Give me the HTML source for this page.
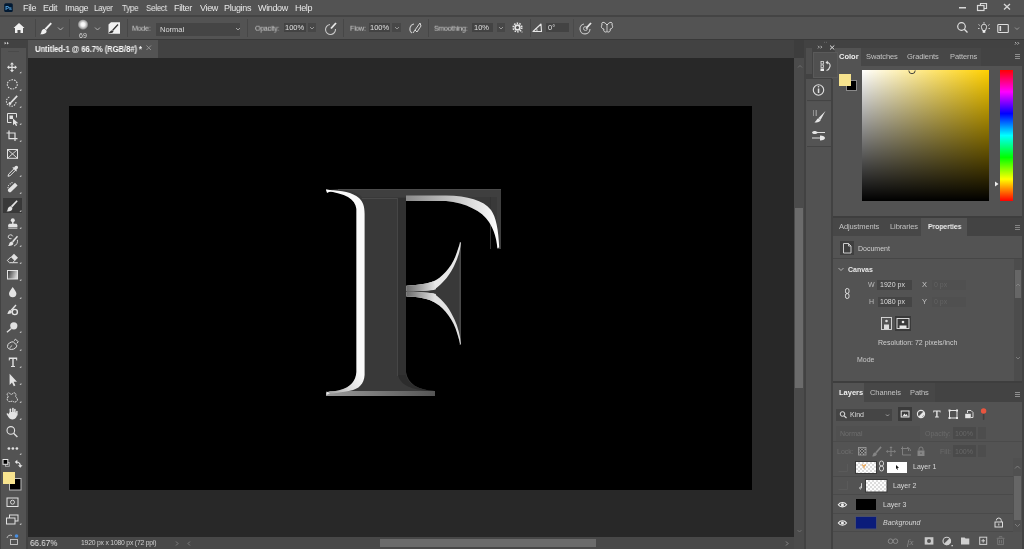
<!DOCTYPE html>
<html><head><meta charset="utf-8">
<style>
*{margin:0;padding:0;box-sizing:border-box}
html,body{width:1024px;height:549px;overflow:hidden;background:#3d3d3d;font-family:"Liberation Sans",sans-serif;color:#d6d6d6}
.a{position:absolute}
.t{position:absolute;white-space:nowrap;line-height:1;will-change:transform}
.menu{font-size:9px;color:#e8e8e8;top:3.6px;letter-spacing:-0.35px}
.lbl{font-size:7.5px;color:#cfcfcf;letter-spacing:-0.2px;transform:translateY(.7px) scaleX(.93);transform-origin:0 0}
.ptab{font-size:7.5px;color:#c2c2c2;letter-spacing:-0.1px}
svg{position:absolute;left:0;top:0;will-change:transform}
</style></head>
<body>
<!-- ===== base panels ===== -->
<div class="a" style="left:0;top:0;width:1024px;height:16px;background:#535353"></div>
<div class="a" style="left:0;top:15px;width:1024px;height:1.5px;background:#444444"></div>
<div class="a" style="left:0;top:17px;width:1024px;height:22px;background:#535353"></div>
<div class="a" style="left:0;top:39px;width:1024px;height:1px;background:#393939"></div>
<!-- doc tab strip -->
<div class="a" style="left:28px;top:40px;width:766px;height:18px;background:#424242"></div>
<div class="a" style="left:28px;top:40px;width:130px;height:18px;background:#535353"></div>
<div class="t" style="left:35px;top:44.7px;font-size:8.3px;font-weight:bold;color:#f4f4f4;letter-spacing:-0.1px;transform:scaleX(.93);transform-origin:0 0">Untitled-1 @ 66.7% (RGB/8#) *</div>
<div class="a" style="left:28px;top:58px;width:766px;height:479px;background:#282828"></div>
<div class="a" style="left:69px;top:106px;width:683px;height:384px;background:#000"></div>
<!-- status bar -->
<div class="a" style="left:28px;top:537px;width:766px;height:12px;background:#484848"></div>
<div class="t" style="left:29.8px;top:538.6px;font-size:9px;color:#e2e2e2;transform:scaleX(.9);transform-origin:0 0">66.67%</div>
<div class="t" style="left:80.5px;top:539.8px;font-size:6.8px;color:#cfcfcf;letter-spacing:-0.2px">1920 px x 1080 px (72 ppi)</div>
<div class="a" style="left:380px;top:539px;width:216px;height:8px;background:#6b6b6b"></div>
<!-- toolbar -->
<div class="a" style="left:0;top:40px;width:28px;height:509px;background:#424242"></div>
<div class="a" style="left:1px;top:48px;width:25px;height:501px;background:#535353"></div>
<div class="a" style="left:8px;top:51px;width:11px;height:1px;background:#4a4a4a"></div>
<div class="a" style="left:3px;top:198px;width:19px;height:15px;background:#393939"></div>
<!-- vertical scrollbar -->
<div class="a" style="left:794px;top:58px;width:10px;height:491px;background:#4b4b4b"></div>
<div class="a" style="left:794.5px;top:208px;width:8.5px;height:180px;background:#6b6b6b"></div>

<!-- icon column -->
<div class="a" style="left:804px;top:40px;width:220px;height:509px;background:#424242"></div>
<div class="a" style="left:806px;top:79px;width:26px;height:470px;background:#525252"></div>
<div class="a" style="left:806px;top:48px;width:6px;height:26px;background:#4e4e4e"></div>
<div class="a" style="left:807px;top:80px;width:25px;height:21px;background:#525252;border-bottom:1px solid #444"></div>
<div class="a" style="left:807px;top:102px;width:25px;height:45px;background:#545454;border-bottom:1px solid #444"></div>
<!-- right panel column -->
<div class="a" style="left:832px;top:48px;width:190px;height:501px;background:#535353"></div>

<!-- Color panel -->
<div class="a" style="left:832px;top:48px;width:190px;height:18px;background:#434343"></div>
<div class="a" style="left:861px;top:48px;width:120px;height:18px;background:#474747"></div>
<div class="a" style="left:835px;top:48px;width:26px;height:18px;background:#535353"></div>
<div class="t" style="left:839px;top:52.6px;font-size:7.5px;font-weight:bold;color:#f0f0f0">Color</div>
<div class="t ptab" style="left:866px;top:52.6px">Swatches</div>
<div class="t ptab" style="left:907px;top:52.6px">Gradients</div>
<div class="t ptab" style="left:950px;top:52.6px">Patterns</div>
<div class="a" style="left:839px;top:74px;width:12px;height:12px;background:#f6e38e;border:1px solid #6a6a6a"></div>
<div class="a" style="left:846px;top:80px;width:11px;height:11px;background:#000;border:1px solid #8a8a8a"></div>
<div class="a" style="left:839px;top:74px;width:12px;height:12px;background:#f6e38e"></div>
<div class="a" style="left:862px;top:70px;width:127px;height:131px;background:linear-gradient(to bottom,rgba(0,0,0,0),#000),linear-gradient(to right,#fff,#ffd000)"></div>
<div class="a" style="left:1000px;top:70px;width:13px;height:131px;background:linear-gradient(to bottom,#ff0000 0%,#ff00ff 16.7%,#0000ff 33.3%,#00ffff 50%,#00ff00 66.7%,#ffff00 83.3%,#ff0000 100%)"></div>
<div class="a" style="left:832px;top:216px;width:190px;height:2px;background:#3e3e3e"></div>

<div class="a" style="left:813px;top:52px;width:25px;height:26px;background:#505050;border:1px solid #5a5a5a"></div>
<!-- Properties panel -->
<div class="a" style="left:832px;top:218px;width:190px;height:18px;background:#434343"></div>
<div class="a" style="left:832px;top:218px;width:89px;height:18px;background:#474747"></div>
<div class="a" style="left:921px;top:218px;width:46px;height:18px;background:#535353"></div>
<div class="t ptab" style="left:839px;top:222.6px">Adjustments</div>
<div class="t ptab" style="left:890px;top:222.6px">Libraries</div>
<div class="t" style="left:928px;top:222.6px;font-size:7.5px;font-weight:bold;color:#f0f0f0;transform:scaleX(.9);transform-origin:0 0">Properties</div>
<div class="a" style="left:840px;top:241px;width:14px;height:14px;background:#3f3f3f"></div>
<div class="t" style="left:858px;top:245px;font-size:7px;color:#d0d0d0">Document</div>
<div class="a" style="left:832px;top:258px;width:190px;height:1px;background:#464646"></div>
<div class="t" style="left:848px;top:266px;font-size:7px;font-weight:bold;color:#e8e8e8">Canvas</div>
<div class="t" style="left:868px;top:281px;font-size:7px;color:#bcbcbc">W</div>
<div class="a" style="left:877px;top:280px;width:35px;height:10px;background:#454545"></div>
<div class="t" style="left:880px;top:281px;font-size:7px;color:#dedede">1920 px</div>
<div class="t" style="left:922px;top:281px;font-size:7.5px;color:#c4c4c4">X</div>
<div class="a" style="left:932px;top:280px;width:34px;height:10px;background:#505050"></div>
<div class="t" style="left:934px;top:281px;font-size:7px;color:#636363">0 px</div>
<div class="t" style="left:869px;top:298px;font-size:7px;color:#bcbcbc">H</div>
<div class="a" style="left:878px;top:297px;width:34px;height:10px;background:#454545"></div>
<div class="t" style="left:880px;top:298px;font-size:7px;color:#dedede">1080 px</div>
<div class="t" style="left:922px;top:298px;font-size:7.5px;color:#c4c4c4">Y</div>
<div class="a" style="left:932px;top:297px;width:34px;height:10px;background:#505050"></div>
<div class="t" style="left:934px;top:298px;font-size:7px;color:#636363">0 px</div>
<div class="a" style="left:895px;top:316px;width:16px;height:15px;background:#3a3a3a"></div>
<div class="t" style="left:878px;top:339px;font-size:7px;color:#cfcfcf">Resolution: 72 pixels/inch</div>
<div class="t" style="left:857px;top:356px;font-size:7px;color:#c8c8c8">Mode</div>
<div class="a" style="left:1014px;top:259px;width:8px;height:122px;background:#4c4c4c"></div>
<div class="a" style="left:1015px;top:270px;width:6px;height:28px;background:#666"></div>
<div class="a" style="left:832px;top:381px;width:190px;height:2px;background:#3e3e3e"></div>

<!-- Layers panel -->
<div class="a" style="left:832px;top:383px;width:190px;height:19px;background:#434343"></div>
<div class="a" style="left:864px;top:383px;width:71px;height:19px;background:#474747"></div>
<div class="a" style="left:832px;top:383px;width:32px;height:19px;background:#535353"></div>
<div class="t" style="left:839px;top:388.6px;font-size:7.5px;font-weight:bold;color:#f0f0f0">Layers</div>
<div class="t ptab" style="left:870px;top:388.6px">Channels</div>
<div class="t ptab" style="left:910px;top:388.6px">Paths</div>
<div class="a" style="left:836px;top:409px;width:56px;height:12px;background:#454545"></div>
<div class="t" style="left:850px;top:411px;font-size:7px;color:#dcdcdc">Kind</div>
<div class="a" style="left:898px;top:407px;width:14px;height:14px;background:#3a3a3a"></div>
<div class="a" style="left:836px;top:426px;width:84px;height:16px;background:#505050"></div>
<div class="t" style="left:840px;top:430px;font-size:7px;color:#6e6e6e">Normal</div>
<div class="t" style="left:925px;top:430px;font-size:7px;color:#6a6a6a">Opacity:</div>
<div class="a" style="left:953px;top:427px;width:23px;height:12px;background:#4a4a4a"></div>
<div class="t" style="left:955px;top:430px;font-size:7px;color:#676767">100%</div>
<div class="a" style="left:978px;top:427px;width:8px;height:12px;background:#4d4d4d"></div>
<div class="a" style="left:832px;top:441px;width:190px;height:1px;background:#4b4b4b"></div>
<div class="t" style="left:837px;top:448px;font-size:7px;color:#6e6e6e">Lock:</div>
<div class="t" style="left:940px;top:448px;font-size:7px;color:#6a6a6a">Fill:</div>
<div class="a" style="left:953px;top:445px;width:23px;height:12px;background:#4a4a4a"></div>
<div class="t" style="left:955px;top:448px;font-size:7px;color:#676767">100%</div>
<div class="a" style="left:978px;top:445px;width:8px;height:12px;background:#4d4d4d"></div>
<!-- layer rows -->
<div class="a" style="left:832px;top:458px;width:181px;height:74px;background:#535353"></div>
<div class="a" style="left:832px;top:476px;width:181px;height:1px;background:#4a4a4a"></div>
<div class="a" style="left:832px;top:494px;width:181px;height:1px;background:#4a4a4a"></div>
<div class="a" style="left:832px;top:513px;width:181px;height:1px;background:#4a4a4a"></div>
<div class="a" style="left:832px;top:531px;width:181px;height:1px;background:#4a4a4a"></div>
<div class="a" style="left:856px;top:462px;width:20px;height:11px;background:#f2f2f2"></div>
<div class="a" style="left:887px;top:462px;width:20px;height:11px;background:#fff"></div>
<div class="t" style="left:913px;top:463px;font-size:7px;color:#d8d8d8">Layer 1</div>
<div class="a" style="left:866px;top:480px;width:21px;height:12px;background:#f2f2f2"></div>
<div class="t" style="left:893px;top:482px;font-size:7px;color:#d8d8d8">Layer 2</div>
<div class="a" style="left:856px;top:499px;width:20px;height:11px;background:#000"></div>
<div class="t" style="left:883px;top:501px;font-size:7px;color:#d8d8d8">Layer 3</div>
<div class="t" style="left:883px;top:519px;font-size:7px;font-style:italic;color:#d8d8d8">Background</div>
<div class="a" style="left:1013px;top:458px;width:9px;height:74px;background:#505050"></div>
<div class="a" style="left:1014px;top:476px;width:7px;height:44px;background:#666"></div>

<div class="a" style="left:831px;top:79px;width:2px;height:470px;background:#424242"></div>
<!-- ===== options bar text ===== -->
<div class="t" style="left:78.8px;top:31.6px;font-size:7px;color:#dadada">69</div>
<div class="t lbl" style="left:132px;top:24px">Mode:</div>
<div class="a" style="left:156px;top:23px;width:84px;height:13px;background:#454545"></div>
<div class="t" style="left:160px;top:26px;font-size:7.5px;color:#dcdcdc">Normal</div>
<div class="t lbl" style="left:255px;top:24px">Opacity:</div>
<div class="a" style="left:284px;top:23px;width:22px;height:9px;background:#434343"></div>
<div class="t" style="left:285px;top:24px;font-size:7.5px;color:#e0e0e0">100%</div>
<div class="a" style="left:308px;top:23px;width:8px;height:9px;background:#474747"></div>
<div class="t lbl" style="left:350px;top:24px">Flow:</div>
<div class="a" style="left:369px;top:23px;width:21px;height:9px;background:#434343"></div>
<div class="t" style="left:370px;top:24px;font-size:7.5px;color:#e0e0e0">100%</div>
<div class="a" style="left:392px;top:23px;width:9px;height:9px;background:#474747"></div>
<div class="t lbl" style="left:434px;top:24px">Smoothing:</div>
<div class="a" style="left:472px;top:23px;width:21px;height:9px;background:#434343"></div>
<div class="t" style="left:474px;top:24px;font-size:7.5px;color:#e0e0e0">10%</div>
<div class="a" style="left:497px;top:23px;width:8px;height:9px;background:#474747"></div>
<div class="a" style="left:546px;top:23px;width:23px;height:9px;background:#434343"></div>
<div class="t" style="left:548px;top:24px;font-size:7.5px;color:#e0e0e0">0°</div>

<!-- menu -->
<div class="t menu" style="left:23px">File</div>
<div class="t menu" style="left:43px">Edit</div>
<div class="t menu" style="left:64.5px">Image</div>
<div class="t menu" style="left:94.4px;transform:scaleX(.9);transform-origin:0 0">Layer</div>
<div class="t menu" style="left:121.5px;transform:scaleX(.9);transform-origin:0 0">Type</div>
<div class="t menu" style="left:146px;transform:scaleX(.9);transform-origin:0 0">Select</div>
<div class="t menu" style="left:174px">Filter</div>
<div class="t menu" style="left:200px">View</div>
<div class="t menu" style="left:224px">Plugins</div>
<div class="t menu" style="left:258px">Window</div>
<div class="t menu" style="left:295px">Help</div>

<!-- ===== SVG overlay: icons + letter ===== -->
<svg width="1024" height="549" viewBox="0 0 1024 549">
<defs>
<linearGradient id="bev" x1="0" y1="0" x2="1" y2="0"><stop offset="0" stop-color="#cfcfcf"/><stop offset="1" stop-color="#ffffff"/></linearGradient>
<radialGradient id="tip" cx="0.5" cy="0.45" r="0.5"><stop offset="0" stop-color="#fff"/><stop offset="0.35" stop-color="#f2f2f2"/><stop offset="0.75" stop-color="#a8a8a8"/><stop offset="1" stop-color="#535353"/></radialGradient>
</defs>
<!-- Ps logo -->
<rect x="4.2" y="3.3" width="8.6" height="8.7" rx="1.5" fill="#021a33"/>
<text x="5.3" y="10.2" font-size="5.6" font-weight="bold" fill="#5aaae6" font-family="Liberation Sans" letter-spacing="-0.3">Ps</text>
<!-- window controls -->
<rect x="959" y="7" width="7" height="1.5" fill="#d8d8d8"/>
<rect x="977.5" y="5.5" width="6.5" height="5" fill="none" stroke="#d8d8d8" stroke-width="1.2"/>
<path d="M980.5 5.5V3.5H986.5V8.5H984" fill="none" stroke="#d8d8d8" stroke-width="1.2"/>
<path d="M1004 4L1010 9.5M1010 4L1004 9.5" stroke="#d8d8d8" stroke-width="1.3"/>
<!-- options icons -->
<path d="M13.5 28L19 23L24.5 28H23V33H20.5V30H17.5V33H15V28Z" fill="#f0f0f0"/>
<rect x="35" y="19" width="1" height="18" fill="#474747"/>
<rect x="69" y="19" width="1" height="18" fill="#474747"/>
<rect x="127" y="19" width="1" height="18" fill="#474747"/>
<rect x="247" y="19" width="1" height="18" fill="#474747"/>
<rect x="343" y="19" width="1" height="18" fill="#474747"/>
<rect x="428" y="19" width="1" height="18" fill="#474747"/>
<rect x="530" y="19" width="1" height="18" fill="#474747"/>
<rect x="573" y="19" width="1" height="18" fill="#4a4a4a"/>
<path d="M50.6 22.4L51.9 23.7L46.2 30L44.8 28.6Z" fill="#f0f0f0"/>
<path d="M44.5 28.8C42.3 29.1 41.6 30.8 41.3 32.2C41.1 33.2 40.7 33.8 40 34.2C42.5 34.5 45.3 34 46.2 32.5C46.7 31.7 46.6 30.6 46.2 30.2Z" fill="#f0f0f0"/>
<path d="M58 27.5L60.5 30L63 27.5" fill="none" stroke="#bbb" stroke-width="0.9"/>
<circle cx="83" cy="25" r="5.5" fill="url(#tip)"/>
<path d="M95 27.5L97.5 30L100 27.5" fill="none" stroke="#bbb" stroke-width="0.9"/>
<path d="M108.5 24.5L111 22.3H120V33.7H108.5Z" fill="#f0f0f0"/>
<path d="M118 24.5L112.5 30.5M112 30.8C111 31 110.5 32 110 32.5C111.5 32.5 112.8 31.8 113 31" stroke="#333" stroke-width="1.3" fill="none"/>
<path d="M236 28L238 30L240 28" fill="none" stroke="#bbb" stroke-width="0.8"/>
<path d="M310 27L312 29L314 27" fill="none" stroke="#aaa" stroke-width="0.8"/>
<path d="M395 27L397 29L399 27" fill="none" stroke="#aaa" stroke-width="0.8"/>
<path d="M499 27L501 29L503 27" fill="none" stroke="#aaa" stroke-width="0.8"/>
<!-- airbrush 1 -->
<path d="M330 24.5A5 5 0 1 0 335.5 29" fill="none" stroke="#c8c8c8" stroke-width="1.1"/>
<path d="M336 23L331 28.5" stroke="#e8e8e8" stroke-width="1.8"/>
<!-- pressure icon -->
<path d="M414 24A5 5 0 0 0 412 33" fill="none" stroke="#c8c8c8" stroke-width="1.1"/>
<path d="M420 23L415 30L417 32L421 26Z" fill="none" stroke="#d8d8d8" stroke-width="1"/>
<path d="M415 30L413 33" stroke="#d8d8d8" stroke-width="1"/>
<!-- gear -->
<circle cx="517.5" cy="27.5" r="4.3" fill="none" stroke="#e6e6e6" stroke-width="1.6" stroke-dasharray="1.5 1.2"/>
<circle cx="517.5" cy="27.5" r="2.4" fill="none" stroke="#e6e6e6" stroke-width="1.6"/>
<rect x="521.5" y="31.5" width="1" height="1" fill="#ddd"/>
<!-- angle -->
<path d="M533 31.5H541.5V31.5L541 24Z" fill="none" stroke="#e6e6e6" stroke-width="1.1" stroke-linejoin="round"/><path d="M537 31.5A4 4 0 0 0 536 28" fill="none" stroke="#e6e6e6" stroke-width="0.9"/>
<!-- pressure size -->
<path d="M584 24A5 5 0 1 0 590 29" fill="none" stroke="#c8c8c8" stroke-width="1.1"/>
<path d="M591 23L586 28.5" stroke="#e8e8e8" stroke-width="1.8"/>
<circle cx="585.5" cy="28.5" r="2" fill="none" stroke="#c8c8c8" stroke-width="0.9"/>
<!-- butterfly -->
<path d="M607 25C604 21 601 22 602 25C600.5 27 602 29 604 29C603 31 605 33 607 31.5C609 33 611 31 610 29C612 29 613.5 27 612 25C613 22 610 21 607 25Z" fill="none" stroke="#e0e0e0" stroke-width="1"/>
<path d="M607 25V31" stroke="#e0e0e0" stroke-width="0.8"/>
<!-- right side opts -->
<circle cx="961.5" cy="26.5" r="3.8" fill="none" stroke="#e0e0e0" stroke-width="1.2"/>
<path d="M964.3 29.3L967.5 32.5" stroke="#e0e0e0" stroke-width="1.3"/>
<path d="M981.5 27.5A2.6 2.6 0 1 1 986.5 27.5L985.5 30.5H982.5Z" fill="none" stroke="#e6e6e6" stroke-width="1"/>
<rect x="982.7" y="30.8" width="2.6" height="2" fill="#f0f0f0"/>
<path d="M984 22V23.5M978.5 24.5L979.8 25.5M989.5 24.5L988.2 25.5M978 28.5H979.5M988.5 28.5H990" stroke="#d8d8d8" stroke-width="0.9"/>
<rect x="997.8" y="24.5" width="10.5" height="8" rx="0.8" fill="none" stroke="#dedede" stroke-width="1.1"/>
<rect x="999.5" y="26" width="1.6" height="5" fill="#dedede"/>
<path d="M1015 27.5L1017 29.5L1019 27.5" fill="none" stroke="#aaa" stroke-width="0.8"/>

<!-- doc tab close -->
<path d="M146.5 45.5L151 50M151 45.5L146.5 50" stroke="#9a9a9a" stroke-width="0.9"/>
<!-- toolbar header -->
<path d="M4.6 41.8L6.4 43.2L4.6 44.6Z M7 41.8L8.8 43.2L7 44.6Z" fill="#d0d0d0"/>

<!-- ===== toolbar icons ===== -->
<g fill="#e2e2e2">
 <!-- move: center (12,67.3) -->
 <path d="M11.4 64.2H12.6V66.7H15.1V67.9H12.6V70.4H11.4V67.9H8.9V66.7H11.4Z"/>
 <path d="M12 62.3L14 64.5H10Z M12 72.3L14 70.1H10Z M7 67.3L9.2 65.3V69.3Z M17 67.3L14.8 65.3V69.3Z"/>
 <!-- object select inner -->
 <rect x="9.5" y="115.5" width="3.5" height="3.5"/>
 <path d="M13 118.5V125.3L14.6 123.8L16 126L17.2 125.4L16 123.2H18.3Z"/>
 <!-- eyedropper -->
 <path d="M15 166.3C15.8 165.5 17 165.5 17.6 166.2C18.3 166.9 18.2 168 17.4 168.8L16.2 170L17 170.8L16.2 171.6L12.4 167.8L13.2 167L14 167.8Z"/>
 <!-- healing -->
 <path d="M15 182.8L17.6 185.4L11.2 191.8C10.5 192.5 9.3 192.5 8.6 191.8L8.4 191.6C7.7 190.9 7.7 189.7 8.4 189Z"/>
 <!-- brush tool -->
 <path d="M16.6 200.2L17.7 201.3L12.2 207.4L10.9 206.1Z"/>
 <path d="M10.6 206.3C8.6 206.6 8 208.1 7.7 209.4C7.5 210.3 7.1 210.9 6.4 211.3C8.7 211.6 11.2 211.1 12 209.8C12.5 209 12.4 208 12 207.6Z"/>
 <!-- stamp -->
 <circle cx="12.8" cy="220.3" r="2"/>
 <rect x="12.1" y="221.5" width="1.4" height="2.5"/>
 <path d="M8.2 227V225.3C8.2 224.4 8.9 223.8 9.8 223.8H15.8C16.7 223.8 17.4 224.4 17.4 225.3V227Z"/>
 <rect x="8.2" y="227.6" width="9.2" height="1"/>
 <!-- history brush -->
 <path d="M17 235.8L18 236.8L13.2 242.4L12 241.2Z"/>
 <path d="M11.7 241.4C9.9 241.7 9.4 243 9.1 244.2C8.9 245 8.6 245.5 8 245.9C10 246.2 12.3 245.7 13 244.6C13.4 243.9 13.3 243 13 242.6Z"/>
 <!-- eraser solid part -->
 <path d="M14 253.8L18 257.8L14.8 261L10.8 257Z"/>
 <!-- blur drop -->
 <path d="M12.7 287C14.6 290 16.4 291.8 16.4 293.6A3.7 3.7 0 0 1 9 293.6C9 291.8 10.8 290 12.7 287Z"/>
 <!-- sponge/dodge brush -->
 <path d="M15.5 304.5L16.5 305.5L11.8 310.8L10.7 309.7Z"/>
 <path d="M10.4 309.9C8.8 310.2 8.3 311.3 8 312.3C7.8 313 7.5 313.5 7 313.8C8.8 314.1 10.8 313.7 11.5 312.7C11.9 312.1 11.8 311.3 11.5 310.9Z"/>
 <!-- dodge lollipop -->
 <circle cx="13.8" cy="325.8" r="3.6"/>
 <!-- T -->
 <path d="M8.8 357.5H17.2V360.5H16.4L16 358.9H13.7V365.9H15V367H11V365.9H12.3V358.9H10L9.6 360.5H8.8Z"/>
 <!-- path select arrow -->
 <path d="M9.6 373.8V385L12 382.4L13.8 386.2L15.4 385.4L13.6 381.7H17Z"/>
 <!-- hand -->
 <path d="M8.6 414.5C8.6 412.5 10 412 12.5 412C15.5 412 17 412.5 17 414.5C17 417.5 15.3 419.4 12.6 419.4C10.3 419.4 9.3 418.3 8.4 417L6.8 414.4C6.3 413.6 7.2 412.9 7.9 413.5Z"/>
 <rect x="9.6" y="408.6" width="1.5" height="7" rx="0.75"/>
 <rect x="12.1" y="407.8" width="1.6" height="7" rx="0.8"/>
 <rect x="14.1" y="408.8" width="1.5" height="7" rx="0.75"/>
 <rect x="16.1" y="410.8" width="1.5" height="5" rx="0.75"/>
 <!-- more dots -->
 <circle cx="8.9" cy="448.5" r="1.35"/><circle cx="12.9" cy="448.5" r="1.35"/><circle cx="16.9" cy="448.5" r="1.35"/>
 <!-- sub arrow marks -->
 <g transform="translate(0,0)">
 <path d="M21.3 71.5V73.3H19.5Z M21.3 89V90.8H19.5Z M21.3 106V107.8H19.5Z M21.3 123V124.8H19.5Z M21.3 140V141.8H19.5Z M21.3 175V176.8H19.5Z M21.3 192V193.8H19.5Z M21.3 210V211.8H19.5Z M21.3 227V228.8H19.5Z M21.3 245V246.8H19.5Z M21.3 262V263.8H19.5Z M21.3 279V280.8H19.5Z M21.3 297V298.8H19.5Z M21.3 331V332.8H19.5Z M21.3 349V350.8H19.5Z M21.3 366V367.8H19.5Z M21.3 383V384.8H19.5Z M21.3 401V402.8H19.5Z M21.3 418V419.8H19.5Z M21.3 453V454.8H19.5Z M21.3 523V524.8H19.5Z"/>
 </g>
</g>
<g fill="none" stroke="#e2e2e2" stroke-width="1.05">
 <!-- marquee -->
 <ellipse cx="12.3" cy="84.4" rx="5" ry="4.6" stroke-dasharray="1.6 1.05"/>
 <!-- quick selection -->
 <path d="M16 102A4.8 4.8 0 1 1 9.5 97" stroke-dasharray="1.5 1.1"/>
 <path d="M17.2 95.8L11 102.5" stroke-width="1.7"/>
 <circle cx="10" cy="103.5" r="1.4" fill="#e2e2e2" stroke="none"/>
 <!-- object select frame -->
 <path d="M16.5 117.5V113.5H7.5V122.5H11.5" stroke-width="1"/>
 <!-- crop -->
 <path d="M9 130.5V138.7H17.5M6.5 133H15V141" stroke-width="1.2"/>
 <!-- frame -->
 <rect x="7.5" y="149.5" width="10" height="8.8" stroke-width="1"/>
 <path d="M7.5 149.5L17.5 158.3M17.5 149.5L7.5 158.3" stroke-width="0.9"/>
 <!-- eyedropper body -->
 <path d="M14.3 168.5L8.6 174.2L8 176.3L10.1 175.7L15.8 170" stroke-width="1"/>
 <!-- healing dots -->
 <path d="M8.5 185.5V185.6M10.2 183.8V183.9M12 182.6V182.7M8 187.6V187.7" stroke-width="1.2" stroke-linecap="round"/>
 <!-- history swirl -->
 <path d="M11.5 238.6C9.4 239.2 7.6 237.8 8.4 236C9.2 234.3 12.3 234.3 12.8 236.4" stroke-width="0.9"/>
 <path d="M17.4 239.8A5.2 5.2 0 0 1 14 246" stroke-width="0.9"/>
 <!-- eraser outline -->
 <path d="M10.8 257L7.3 260.5L9.5 262.7H12.6L14.8 260.5" stroke-width="1"/>
 <path d="M12.6 262.7H17.8" stroke-width="1"/>
 <!-- gradient frame -->
 <!-- sponge ring -->
 <circle cx="14.8" cy="312" r="2.6" stroke-width="1.4"/>
 <!-- lollipop handle -->
 <path d="M11.4 328.4L6.9 332.2" stroke-width="1.3"/>
 <!-- pen -->
 <path d="M7.5 346.5C7.5 343.3 10.8 341.7 13.2 341.8L16.8 345.2C16.8 347.5 14.5 349.5 11.4 349.4C9.2 349.3 7.5 348.4 7.5 346.5Z" stroke-width="1"/>
 <path d="M14 340.6L15.6 339.2L18.2 341.8L16.8 343.4" stroke-width="1"/>
 <path d="M9.5 348L12.2 345.4" stroke-width="0.9"/>
 <!-- custom shape -->
 <path d="M8 396.8C6.6 398.8 7 401.3 9.3 401.6C10.8 401.8 12 400.5 13.4 401.6C15.4 403 18.1 401 17.4 398.9C16.8 397.4 15.1 397.4 15.8 395.6C16.6 393.6 14.6 392 12.9 393.4C11.8 394.3 11.2 395.2 9.9 393.5C8.6 391.8 6.4 393.4 7.4 395.2C7.8 395.9 8.4 396.1 8 396.8Z" stroke-width="1" stroke-dasharray="1.3 0.6"/>
 <!-- zoom -->
 <circle cx="10.8" cy="430.4" r="3.8" stroke-width="1.1"/>
 <path d="M13.6 433.2L17.4 437" stroke-width="1.3"/>
 <!-- quick mask -->
 <rect x="7" y="498" width="11" height="8.5" stroke-width="1"/>
 <circle cx="12.5" cy="502.2" r="2" stroke-width="0.9"/>
 <!-- screen mode -->
 <rect x="9.5" y="515" width="8.5" height="6" stroke-width="1"/>
 <rect x="6.5" y="518" width="8.5" height="6" stroke-width="1" fill="#535353"/>
</g>
<!-- gradient tool -->
<defs><linearGradient id="gt" x1="0" y1="0" x2="1" y2="0.3"><stop offset="0" stop-color="#303030"/><stop offset="1" stop-color="#d0d0d0"/></linearGradient></defs>
<rect x="7.5" y="270.5" width="10" height="8.5" fill="url(#gt)" stroke="#e2e2e2" stroke-width="1"/>
<!-- fg/bg small -->
<rect x="5.5" y="462.5" width="3.8" height="3.8" fill="none" stroke="#bbb" stroke-width="0.8"/>
<rect x="3" y="459.5" width="4.8" height="4.8" fill="#000" stroke="#e6e6e6" stroke-width="1"/>
<path d="M16 462C19 462 20.3 463.5 20.3 466" fill="none" stroke="#e6e6e6" stroke-width="1.2"/><path d="M17.3 459.8L14.8 462L17.3 464.2Z M18 465.3L20.3 467.8L22.6 465.3Z" fill="#e6e6e6"/>
<!-- big swatches -->
<rect x="9.5" y="478.5" width="11.5" height="11.5" fill="#000" stroke="#bdbdbd" stroke-width="1"/>
<rect x="3" y="472" width="12" height="12" fill="#f8e48f"/>
<!-- share -->
<path d="M7 538A3.5 3.5 0 0 1 12 535.5" fill="none" stroke="#c8c8c8" stroke-width="0.9"/>
<rect x="10.5" y="539.5" width="7" height="5" fill="none" stroke="#c8c8c8" stroke-width="0.9"/>
<circle cx="16.5" cy="536" r="1.8" fill="#4a90e2"/>

<!-- icon column -->
<path d="M818 45.8L819.3 47.1L818 48.4M820.5 45.8L821.8 47.1L820.5 48.4" fill="none" stroke="#ccc" stroke-width="0.8"/>
<path d="M830 45.5L834.3 49.5M834.3 45.5L830 49.5" stroke="#e0e0e0" stroke-width="1"/>
<path d="M824 42.3H824.8M826 42.3H826.8" stroke="#888" stroke-width="0.7"/>
<path d="M1015 42L1016.3 43.3L1015 44.6M1017.5 42L1018.8 43.3L1017.5 44.6" fill="none" stroke="#ccc" stroke-width="0.8"/>
<path d="M798 67.5L800 65.5L802 67.5" fill="none" stroke="#777" stroke-width="0.8"/>
<path d="M797.5 530L799.5 532L801.5 530" fill="none" stroke="#777" stroke-width="0.8"/>
<!-- history icon -->
<rect x="821" y="61.5" width="2.5" height="2.5" fill="none" stroke="#ddd" stroke-width="0.8"/>
<rect x="821" y="65" width="2.5" height="2.5" fill="none" stroke="#ddd" stroke-width="0.8"/>
<rect x="820.5" y="68.5" width="3.5" height="2.5" fill="#eee"/>
<path d="M826.5 62.5C829.5 62.5 830.5 64.5 830 66.5C829.5 68.5 828 70 826.5 70.5" fill="none" stroke="#e0e0e0" stroke-width="1.1"/><path d="M825.5 62.5L827.8 60.5V64.5Z" fill="#e0e0e0"/>
<!-- info -->
<circle cx="818.5" cy="90" r="5.2" fill="none" stroke="#e0e0e0" stroke-width="1.1"/>
<rect x="817.8" y="88.5" width="1.5" height="4.5" fill="#e0e0e0"/>
<circle cx="818.5" cy="86.7" r="0.8" fill="#e0e0e0"/>
<!-- brushes -->
<path d="M813 111H814M813 113H814M813 115H814M815.5 111H817M815.5 113H817M815.5 115H817" stroke="#ccc" stroke-width="1"/>
<path d="M825.5 111L818.5 118L820.5 120Z" fill="#e6e6e6"/>
<path d="M818.3 118.2C816.5 119 816.3 121 814.5 122.5C817.5 122.5 820 121.8 820.7 120.2Z" fill="#e6e6e6"/>
<path d="M817 132.5H825M812 138H820" stroke="#e0e0e0" stroke-width="1.2"/>
<path d="M812 132.5C813 130.5 816 130.5 818 132.5C816 134.5 813 134.5 812 132.5Z" fill="#e6e6e6"/>
<path d="M820 135.5C823 135.5 825 136.5 825 138C825 139.5 823 140.5 820 140.5Z" fill="#e6e6e6"/>
<path d="M786 541.5L788 543.5L786 545.5" fill="none" stroke="#9a9a9a" stroke-width="0.8"/>
<path d="M176 541.5L178 543.5L176 545.5M190 541.5L188 543.5L190 545.5" fill="none" stroke="#8a8a8a" stroke-width="0.8"/>

<!-- color panel extras -->
<path d="M1015 54.5H1020M1015 56.5H1020M1015 58.5H1020" stroke="#b0b0b0" stroke-width="0.7"/>
<path d="M908.8 70.5A3.2 3.2 0 0 0 915.2 70.5" fill="none" stroke="#333" stroke-width="0.9"/>
<path d="M995 181.5L998.5 184L995 186.5Z" fill="#eee"/>
<path d="M1015 225.5H1020M1015 227.5H1020M1015 229.5H1020" stroke="#a0a0a0" stroke-width="0.7"/>
<!-- props -->
<path d="M843.5 243.5H848.5L851 246V253H843.5Z" fill="none" stroke="#ddd" stroke-width="0.9"/>
<path d="M848.5 243.5V246H851" fill="none" stroke="#ddd" stroke-width="0.8"/>
<path d="M838.5 268L841 270.5L843.5 268" fill="none" stroke="#bbb" stroke-width="0.9"/>
<rect x="845.5" y="288.5" width="3.5" height="5" rx="1.7" fill="none" stroke="#ddd" stroke-width="1"/>
<rect x="845.5" y="293.5" width="3.5" height="5" rx="1.7" fill="none" stroke="#ddd" stroke-width="1"/>
<rect x="881.5" y="317.5" width="10" height="12" fill="none" stroke="#ddd" stroke-width="0.9"/>
<circle cx="886.5" cy="321" r="1.3" fill="#ddd"/>
<path d="M884 329V324.5H889V329Z" fill="#ddd"/>
<rect x="897" y="318.5" width="12" height="10" fill="none" stroke="#e8e8e8" stroke-width="0.9"/>
<circle cx="903" cy="322" r="1.3" fill="#e8e8e8"/>
<path d="M899.5 328V325.5H906.5V328Z" fill="#e8e8e8"/>
<path d="M1016 286L1018 284L1020 286M1016 357L1018 359L1020 357" fill="none" stroke="#888" stroke-width="0.8"/>
<path d="M1015 392.5H1020M1015 394.5H1020M1015 396.5H1020" stroke="#b0b0b0" stroke-width="0.7"/>
<!-- layers kind -->
<circle cx="842.5" cy="414" r="2.3" fill="none" stroke="#e0e0e0" stroke-width="1"/>
<path d="M844.2 415.8L846.5 418" stroke="#e0e0e0" stroke-width="1.1"/>
<path d="M886 414.5L887.5 416L889 414.5" fill="none" stroke="#bbb" stroke-width="0.8"/>
<rect x="901.2" y="411" width="7.8" height="6" fill="none" stroke="#e6e6e6" stroke-width="1"/>
<path d="M902.6 416.2L904.4 413.6L905.6 415L906.6 414L907.8 416.2Z" fill="#e6e6e6"/>
<circle cx="921" cy="414" r="3.6" fill="none" stroke="#e6e6e6" stroke-width="1.1"/>
<path d="M918.5 416.5L923.5 411.5A3.6 3.6 0 0 1 918.5 416.5Z" fill="#e6e6e6"/>
<path d="M933.3 410.5H940.5V412.6H939.9L939.6 411.5H937.6V416.6H938.8V417.6H935V416.6H936.2V411.5H934.2L933.9 412.6H933.3Z" fill="#e6e6e6"/>
<rect x="949.5" y="410.5" width="7.5" height="7.5" fill="none" stroke="#e6e6e6" stroke-width="1"/>
<rect x="948.5" y="409.5" width="2" height="2" fill="#e6e6e6"/><rect x="956" y="409.5" width="2" height="2" fill="#e6e6e6"/><rect x="948.5" y="417" width="2" height="2" fill="#e6e6e6"/><rect x="956" y="417" width="2" height="2" fill="#e6e6e6"/>
<path d="M967.5 413V410.5H971L973 412.5V417.5H971" fill="none" stroke="#e6e6e6" stroke-width="0.9"/>
<rect x="965.2" y="413.8" width="5.6" height="4.4" fill="#e6e6e6"/>
<rect x="982.8" y="413" width="1.6" height="7" rx="0.8" fill="#3f3f3f"/>
<circle cx="983.6" cy="411" r="2.7" fill="#e8553f"/>
<!-- blend chevrons (dim) -->

<!-- lock icons dim -->
<defs><pattern id="chk2" x="858" y="447" width="3.2" height="3.2" patternUnits="userSpaceOnUse"><rect width="3.2" height="3.2" fill="#a0a0a0"/><rect width="1.6" height="1.6" fill="#353535"/><rect x="1.6" y="1.6" width="1.6" height="1.6" fill="#353535"/></pattern></defs>
<rect x="858.5" y="447.5" width="7.5" height="7.5" fill="url(#chk2)" stroke="#999" stroke-width="0.9"/>
<g fill="#858585">
 <path d="M880.5 446.3L881.7 447.5L876.7 453.2L875.5 452Z"/>
 <path d="M875.2 452.2C873.6 452.5 873.2 453.7 872.9 454.8C872.7 455.5 872.4 456 871.9 456.3C873.7 456.6 875.8 456.2 876.5 455.1C876.9 454.4 876.8 453.6 876.5 453.2Z"/>
 <path d="M891 446.2L892.6 448H889.4Z M891 456.6L892.6 454.8H889.4Z M886 451.4L887.8 449.8V453Z M896 451.4L894.2 449.8V453Z"/>
</g>
<g fill="none" stroke="#858585" stroke-width="0.9">
 <path d="M891 448V454.8M887.8 451.4H894.2"/>
 <path d="M902.5 446.5V455H911M901 448.5H908.5V451"/>
 <path d="M907 447.5C909 447.5 910.5 449 910.5 451"/>
 <path d="M919 450.5V449A2 2 0 0 1 923 449V450.5"/>
</g>
<path d="M917.5 450.5H924.5V456H917.5Z" fill="#858585"/>
<rect x="920.5" y="452.5" width="1" height="1.5" fill="#535353"/>
<!-- layer row icons -->
<path d="M838.5 471.5H847.5V464" fill="none" stroke="#5c5c5c" stroke-width="0.8"/>
<path d="M838.5 489.5H847.5V481" fill="none" stroke="#5c5c5c" stroke-width="0.8"/>
<rect x="879.5" y="461" width="4" height="5" rx="2" fill="none" stroke="#dcdcdc" stroke-width="0.9"/>
<rect x="879.5" y="466" width="4" height="5" rx="2" fill="none" stroke="#dcdcdc" stroke-width="0.9"/>
<path d="M896 465L899 467.8L897.3 467.9L898 469.5L897.3 469.8L896.6 468.3L896 469.3Z" fill="#111"/>
<path d="M861.5 483.2V488H859.8" fill="none" stroke="#dcdcdc" stroke-width="0.9"/>
<path d="M860.8 486.6L859.3 488L860.8 489.4" fill="none" stroke="#dcdcdc" stroke-width="0.8"/>
<path d="M838.3 504.7C840.3 501.8 844.6 501.8 846.6 504.7C844.6 507.6 840.3 507.6 838.3 504.7Z" fill="none" stroke="#f0f0f0" stroke-width="1.1"/>
<circle cx="842.45" cy="504.7" r="1.5" fill="#f0f0f0"/>
<path d="M838.3 523C840.3 520.1 844.6 520.1 846.6 523C844.6 525.9 840.3 525.9 838.3 523Z" fill="none" stroke="#f0f0f0" stroke-width="1.1"/>
<circle cx="842.45" cy="523" r="1.5" fill="#f0f0f0"/>
<path d="M996.3 520.5A2.5 2.5 0 0 1 1001.3 520.5V522" fill="none" stroke="#dcdcdc" stroke-width="1"/>
<rect x="995" y="522" width="7.5" height="5" fill="none" stroke="#dcdcdc" stroke-width="1"/>
<rect x="998.3" y="523.5" width="1" height="2" fill="#dcdcdc"/>
<path d="M1015 468.5L1017.5 466L1020 468.5M1015 524L1017.5 526.5L1020 524" fill="none" stroke="#888" stroke-width="0.8"/>
<!-- thumbnails -->
<defs><pattern id="chk" x="0" y="0" width="4" height="4" patternUnits="userSpaceOnUse"><rect width="4" height="4" fill="#fdfdfd"/><rect width="2" height="2" fill="#dcdcdc"/><rect x="2" y="2" width="2" height="2" fill="#dcdcdc"/></pattern></defs>
<rect x="855.5" y="461.5" width="21" height="12" fill="url(#chk)" stroke="#3a3a3a" stroke-width="1"/>
<path d="M862 464.5L864 466.5L866 464.5M864 466.5V468.5" stroke="#eba85a" stroke-width="1.2" fill="none"/>
<rect x="865.5" y="479.5" width="21.5" height="12.5" fill="url(#chk)" stroke="#3a3a3a" stroke-width="1"/>
<rect x="855.5" y="516.5" width="21" height="12.5" fill="#0b1c7a" stroke="#4a4f6a" stroke-width="1"/>
<!-- layer footer -->
<g fill="none" stroke="#8a8a8a" stroke-width="1">
 <circle cx="890.5" cy="541.2" r="2.3"/>
 <circle cx="895.5" cy="541.2" r="2.3"/>
</g>
<text x="907" y="544.5" font-size="9" font-style="italic" fill="#8a8a8a" font-family="Liberation Serif">fx</text>
<path d="M924.7 537.2H933.4V544.6H924.7Z" fill="#c8c8c8"/>
<circle cx="929" cy="540.9" r="2" fill="#535353"/>
<circle cx="946.8" cy="541" r="3.8" fill="none" stroke="#cfcfcf" stroke-width="1.1"/>
<path d="M944 543.8L949.6 538.2A3.8 3.8 0 0 1 944 543.8Z" fill="#cfcfcf"/>
<rect x="951.5" y="545" width="1.3" height="1.3" fill="#e0e0e0"/>
<path d="M961 537.4H964.6L965.6 538.6H969.3V544.6H961Z" fill="#d0d0d0"/>
<rect x="979.7" y="537.2" width="7" height="7.2" fill="none" stroke="#cfcfcf" stroke-width="1"/>
<path d="M983.2 539V542.6M981.4 540.8H985" stroke="#cfcfcf" stroke-width="1"/>
<g fill="none" stroke="#7a7a7a" stroke-width="0.9">
 <path d="M996.7 538.3H1004.5M997.7 538.8V544.6H1003.5V538.8M999.2 537.5V536.7H1002V537.5M999.6 540V543.5M1001.6 540V543.5"/>
</g>

<!-- ===== Letter F ===== -->
<defs>
 <linearGradient id="stem" x1="0" y1="0" x2="0" y2="1"><stop offset="0" stop-color="#3c3c3c"/><stop offset="1" stop-color="#343434"/></linearGradient>
 <linearGradient id="topbar" x1="0" y1="0" x2="1" y2="0"><stop offset="0" stop-color="#8a8a8a"/><stop offset="0.6" stop-color="#d0d0d0"/><stop offset="1" stop-color="#ffffff"/></linearGradient>
 <linearGradient id="bev2" gradientUnits="userSpaceOnUse" x1="327" y1="393" x2="360" y2="372"><stop offset="0" stop-color="#9a9a9a"/><stop offset="0.55" stop-color="#dcdcdc"/><stop offset="1" stop-color="#fafafa"/></linearGradient>
 <linearGradient id="armg" x1="0" y1="0" x2="1" y2="0"><stop offset="0" stop-color="#6a6a6a"/><stop offset="0.4" stop-color="#9a9a9a"/><stop offset="1" stop-color="#e8e8e8"/></linearGradient>
 <linearGradient id="botbar" x1="0" y1="0" x2="1" y2="0"><stop offset="0" stop-color="#9a9a9a"/><stop offset="1" stop-color="#555555"/></linearGradient>
</defs>
<!-- base glyph -->
<path d="M326.4 190L340 189H501V249H497.4C496.5 238 494 230 489 222C482 211 466 203 446 201H406V285.7H406.4C420 285 428 283.5 433.7 281.3C441 278 451 268 455.5 256.2C457.5 251 459 246 460.3 242H461V345H460.3C459 339 457.5 334 455.5 328.3C451 316 441 305.5 433.7 302C428 299 420 297 406.4 296.6H406V372C408 384 418 390 435 391V396H326V392C331 391.8 336 391 340 390C351 387 355.7 381 356.4 372V209C355.5 199 345 193 326.4 191Z" fill="#393939"/>
<!-- darker inner stem strip -->
<rect x="397" y="198" width="9" height="177" fill="#313131"/>
<path d="M398 375H406C408 384 418 390 435 391H430C412 390 400 385 398 375Z" fill="#2c2c2c"/>
<rect x="362" y="198" width="35" height="1" fill="#4a4a4a"/><rect x="397" y="198" width="1" height="178" fill="#464646"/>
<rect x="490" y="197" width="1" height="52" fill="#333"/>
<!-- top bar gray highlight -->
<path d="M340 189H501V249H497V197H406V197H362V197C358 193 350 190 340 190Z" fill="#3f3f3f"/>
<rect x="338" y="189" width="163" height="1" fill="#4c4c4c"/>
<!-- top bevel -->
<path d="M406 195.5H446C468 196 483 200 491 210C496 217 498.5 230 499.2 247.5L497.4 248C496.5 238 494 230 489 222C482 211 466 203 446 201H406Z" fill="url(#topbar)"/>
<!-- bottom serif -->
<path d="M330 391H435V396H326V393Z" fill="url(#botbar)"/>
<!-- left serif bevel -->
<path d="M326.4 190.3C340 190 352 192 359 198C363 202 364.6 206 364.6 214V375C364 384 359 389 350 390.8C342 392.3 336 393 330 394L327 393.5L327 392C331 391.8 336 391 340 390C351 387 355.7 381 356.4 372V209C355.5 199 345 193 326.4 191.2Z" fill="url(#bev2)"/>
<path d="M326 189.3L332 190.5L327 193Z" fill="#fff"/>
<path d="M326.5 391.5L330 393.2L326.5 395Z" fill="#e8e8e8"/>
<!-- middle arm bevels -->
<rect x="459.6" y="242" width="1" height="103" fill="#555"/>
<path d="M406.4 285.7C420 285 428 283.5 433.7 281.3C441 278 451 268 455.5 256.2C457.5 251 459 246 460.3 242L460.8 243C460.3 250 458 258 454.5 265C451 273 444 283 433.7 290C426 291 416 291.3 406.4 291.3Z" fill="#e8e8e8"/>
<path d="M406.4 296.6C420 297 428 299 433.7 302C441 305.5 451 316 455.5 328.3C457.5 334 459 339 460.3 344.7L460.8 343.5C460.3 336 458 327 454.5 319.6C451 311 444 300 433.7 293.4C426 292.3 416 292 406.4 292Z" fill="#e2e2e2"/>
<path d="M406.4 285.7C420 285 428 283.5 433.7 281.3L436 289.3C430 290.6 420 291.3 406.4 291.3Z" fill="url(#armg)"/>
<path d="M406.4 296.6C420 297 428 299 433.7 302L436 294C430 292.6 420 292 406.4 292Z" fill="url(#armg)"/>
</svg>
</body></html>
